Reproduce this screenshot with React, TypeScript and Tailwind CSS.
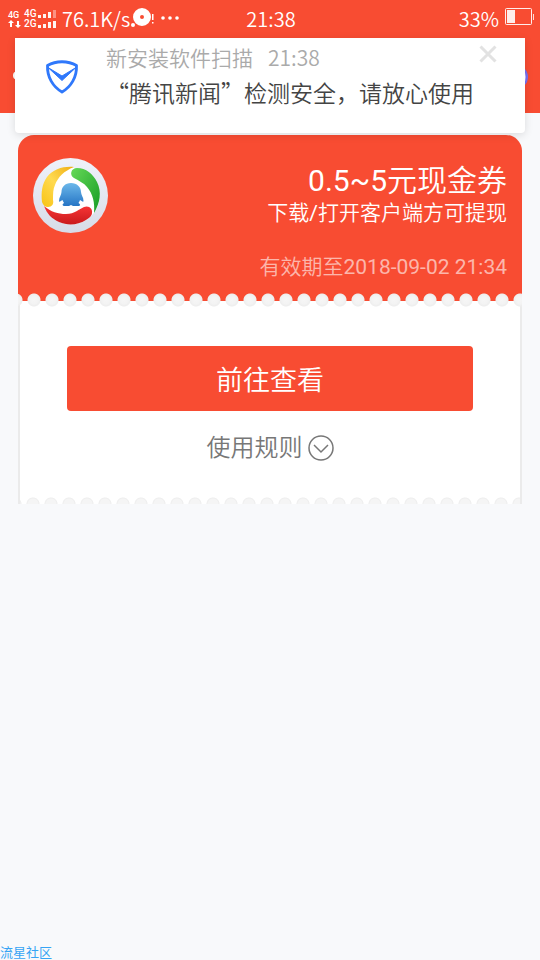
function SignalBars({ levels }: { levels: number[] }) {
  return (
    <svg width="19" height="8" viewBox="0 0 19 8" fill="#fff" aria-hidden="true">
      {levels.map((h, i) => (
        <rect key={i} x={i * 5} y={8 - h} width="3" height={h} opacity={i === 3 && h === 8 ? 0.4 : 0.95} />
      ))}
    </svg>
  );
}

function StatusBar() {
  return (
    <div className="grid h-[38px] grid-cols-[1fr_auto_1fr] items-center pl-2 pr-1.5 font-['Noto_Sans_CJK_SC','Noto_Sans',sans-serif] text-[20px] font-[350] leading-[26px] text-white">
      <div className="flex items-center">
        <div className="flex w-4 flex-col items-start">
          <span className="font-['Roboto',sans-serif] text-[9px] font-medium leading-[9px]">4G</span>
          <svg width="13" height="8" viewBox="0 0 13 8" fill="#fff" aria-hidden="true">
            <path d="M3 0 6 3H4v4H2V3H0zM10 8 7 5h2V1h2v4h2z" />
          </svg>
        </div>
        <div className="flex flex-col font-['Roboto',sans-serif] text-[10px] font-medium leading-[10px]">
          <div className="flex items-center"><span className="w-[14px]">4G</span><SignalBars levels={[3, 4, 6, 8]} /></div>
          <div className="flex items-center"><span className="w-[14px]">2G</span><SignalBars levels={[3, 4, 6, 7]} /></div>
        </div>
        <span className="ml-[5px] w-[68px] whitespace-nowrap">76.1K/s</span>
        <svg className="-mt-0.5" width="50" height="20" viewBox="0 0 50 20" fill="#fff" aria-hidden="true">
          <path fillRule="evenodd" d="M12 0a9 9 0 1 1 0 18a9 9 0 0 1 0-18zM12 7a2 2 0 1 0 0 4a2 2 0 0 0 0-4z" />
          <circle cx="3" cy="17" r="2" />
          <path d="M22 6h1.500v6h-1.500zM22 14h1.500v1.500h-1.500z" />
          <circle cx="33" cy="10" r="1.800" /><circle cx="40" cy="10" r="1.800" /><circle cx="47" cy="10" r="1.800" />
        </svg>
      </div>
      <time>21:38</time>
      <div className="flex items-center justify-end gap-1.5">
        <span>33%</span>
        <svg className="-mt-1" width="29" height="18" viewBox="0 0 29 18" fill="none" aria-hidden="true">
          <rect x="0.5" y="0.5" width="26" height="16" rx="1" stroke="#fff" strokeOpacity=".9" />
          <rect x="2" y="2" width="8" height="13" fill="#fff" fillOpacity=".9" />
          <path d="M28.500 6v6" stroke="#fff" strokeOpacity=".8" />
        </svg>
      </div>
    </div>
  );
}

function Notification() {
  return (
    <section className="absolute inset-x-[15px] top-[38px] z-10 flex h-[95px] rounded-b-sm bg-white shadow-[0_2px_8px_rgba(0,0,0,0.12)]">
      <svg className="ml-[30px] mt-[22px] shrink-0" width="34" height="34" viewBox="0 0 34 34" fill="none" aria-hidden="true">
        <path d="M2.500 5.500C11 .5 23 .5 31.500 5.500C32 17 26 27 17 32C8 27 2 17 2.500 5.500Z" stroke="#2f78fb" strokeWidth="2.800" strokeLinejoin="round" />
        <path d="M3 7.500 17 16 31 7.500 17 20.500Z" fill="#2f78fb" stroke="#2f78fb" strokeLinejoin="round" />
      </svg>
      <div className="ml-[27px] flex flex-col whitespace-nowrap font-['Noto_Sans_CJK_SC',sans-serif]">
        <p className="mt-[3px] flex gap-[15px] text-[21px] font-[350] leading-[32px] text-[#aaa]">
          <span>新安装软件扫描</span><time>21:38</time>
        </p>
        <p className="mt-0.5 text-[23px] font-[350] leading-[34px] text-[#444]">“腾讯新闻”检测安全，请放心使用</p>
      </div>
      <button type="button" aria-label="关闭" className="absolute right-7 top-[7px] h-[18px] w-[18px]">
        <svg width="18" height="18" viewBox="0 0 18 18" stroke="#e2e2e2" strokeWidth="3" aria-hidden="true">
          <path d="M1.500 1.500 16.500 16.500M16.500 1.500 1.500 16.500" />
        </svg>
      </button>
    </section>
  );
}

function NewsLogo() {
  return (
    <svg className="shrink-0" width="75" height="75" viewBox="0 0 75 75" role="img" aria-label="腾讯新闻">
      <defs>
        <linearGradient id="rim" x1="0" y1="0" x2="0" y2="1"><stop stopColor="#eff2fa" /><stop offset="1" stopColor="#d7dce8" /></linearGradient>
        <linearGradient id="penguin" x1="0" y1="0" x2="0" y2="1"><stop stopColor="#6cb8ea" /><stop offset="1" stopColor="#2675c5" /></linearGradient>
        <linearGradient id="green" x1="0" y1="0" x2="1" y2="1"><stop stopColor="#66d957" /><stop offset="1" stopColor="#159b25" /></linearGradient>
        <linearGradient id="yellow" x1="1" y1="0" x2="0" y2="1"><stop stopColor="#efad12" /><stop offset=".5" stopColor="#ffda50" /><stop offset="1" stopColor="#f8c314" /></linearGradient>
        <linearGradient id="red" x1="0" y1="0" x2="0" y2="1"><stop stopColor="#f73535" /><stop offset="1" stopColor="#c91a1d" /></linearGradient>
      </defs>
      <circle cx="37.500" cy="37.500" r="37.500" fill="url(#rim)" />
      <circle cx="38" cy="38" r="28.500" fill="#fff" />
      <path d="M41 9C31 8 20 11 14 19C9 26 8 34 9 44C10 47 12 49 15 49C19 49 21 46 20 42C20 36 20 31 22 27C25 19 31 13 41 9Z" fill="url(#yellow)" />
      <path d="M44 10C53 10 60 16 64 24C69 34 67 45 61 55C62 45 60 36 54 29C51 25 46 23 41 20C36 17 38 10 44 10Z" fill="url(#green)" />
      <path d="M11 48C18 54 25 56 33 56C42 56 46 51 51 49C56 47 60 51 59 55C59 58 56 60 53 62C45 67 35 68 26 64C19 61 14 56 11 48Z" fill="url(#red)" />
      <path d="M38 25C32 25 28.500 29 28.500 34C28.500 37 26 39 26 43C26 44.500 28 43 29.500 42C30 43.500 30.500 44 31 45C29 46 29 48 32 48H36L38 47L40 48H45C48 48 47.500 46 45.500 45C46 44 46.500 43.500 47 42C48.500 43 50.500 44.500 50.500 43C50.500 39 48 37 48 34C48 29 44 25 38 25Z" fill="url(#penguin)" />
    </svg>
  );
}

function Coupon() {
  return (
    <article className="relative mx-[18px] mt-[22px]">
      <header className="flex h-[166px] items-start justify-between rounded-t-2xl bg-[#f84c32] px-[15px] pt-[23px] font-['Roboto','Noto_Sans_CJK_SC',sans-serif] text-white">
        <NewsLogo />
        <div className="whitespace-nowrap text-right text-[21px] font-[350]">
          <h1 className="mt-[5px] text-[30px] font-[350] leading-[36px]"><span className="font-normal">0.5~5</span>元现金券</h1>
          <p className="leading-[28px]">下载<span className="font-normal">/</span>打开客户端方可提现</p>
          <p className="mt-[26px] leading-[28px] text-white/60">有效期至<time className="font-normal">2018-09-02 21:34</time></p>
        </div>
      </header>
      <div className="absolute inset-x-0 top-[158px] h-[14px] bg-[radial-gradient(circle_at_9px_7px,#f6f6f6_0px,#f3f3f3_4px,#eeeeee_6px,transparent_7px)] bg-[length:18px_14px] bg-[position:7px_0px]" />
      <div className="flex h-[203px] flex-col items-center border-x-2 border-[#ebebeb] bg-white bg-[radial-gradient(circle_at_9px_7px,#f5f5f5_0px,#f5f5f5_5px,#eeeeee_6px,transparent_7px)] bg-[length:18px_7px] bg-[position:4px_bottom] bg-repeat-x px-[47px] pt-[45px] font-['Noto_Sans_CJK_SC',sans-serif] font-[350]">
        <button type="button" className="h-[65px] w-full rounded bg-[#f84c32] pt-0.5 text-[27px] text-white">前往查看</button>
        <button type="button" className="mt-[17px] flex items-center gap-[5px] text-[24px] leading-[36px] text-[#777]">
          使用规则
          <svg className="mt-1" width="26" height="26" viewBox="0 0 26 26" fill="none" stroke="#777" strokeWidth="1.500" aria-hidden="true">
            <circle cx="13" cy="13" r="12" /><path d="M6 10 13 17 20 10" />
          </svg>
        </button>
      </div>
    </article>
  );
}

export default function App() {
  return (
    <main lang="zh-CN" className="relative flex min-h-screen flex-col overflow-hidden bg-[#f8f9fb]">
      <header className="relative h-[113px] bg-[#f84c32]">
        <StatusBar />
        <svg className="absolute left-3 top-[71px]" width="8" height="9" viewBox="0 0 8 9" aria-hidden="true"><circle cx="5" cy="4.500" r="4" fill="#fff" /></svg>
        <svg className="absolute right-3 top-[65px]" width="24" height="24" viewBox="0 0 24 24" aria-hidden="true"><circle cx="12" cy="12" r="11" fill="#cbbcfb" stroke="#7770f2" strokeWidth="2" /></svg>
      </header>
      <Notification />
      <Coupon />
      <footer className="mt-auto font-['Noto_Sans_CJK_SC',sans-serif] text-[13px] leading-[16px] text-[#36a4f4]">流星社区</footer>
    </main>
  );
}
